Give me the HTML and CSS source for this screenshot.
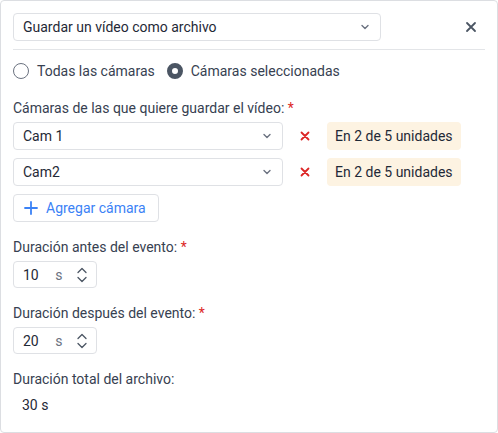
FILE: index.html
```html
<!DOCTYPE html>
<html lang="es">
<head>
<meta charset="utf-8">
<link rel="stylesheet" href="styles.css">
</head>
<body>
<div class="panel">
  <div class="top-row">
    <div class="select select-wide">
      <span>Guardar un vídeo como archivo</span>
      <svg class="chev" width="12" height="12" viewBox="0 0 12 12"><path d="M3 4.5 L6 7.5 L9 4.5" fill="none" stroke="#6b7280" stroke-width="1.4" stroke-linecap="round" stroke-linejoin="round"/></svg>
    </div>
    <button class="close" aria-label="Cerrar">
      <svg width="12" height="12" viewBox="0 0 12 12"><path d="M2 2 L10 10 M10 2 L2 10" stroke="#4b5563" stroke-width="1.8" stroke-linecap="round"/></svg>
    </button>
  </div>
  <div class="divider"></div>
  <div class="radios">
    <label class="radio"><span class="dot"></span>Todas las cámaras</label>
    <label class="radio"><span class="dot on"></span>Cámaras seleccionadas</label>
  </div>

  <div class="label label-first">Cámaras de las que quiere guardar el vídeo: <span class="req">*</span></div>
  <div class="cam-row">
    <div class="select select-cam">
      <span>Cam 1</span>
      <svg class="chev" width="12" height="12" viewBox="0 0 12 12"><path d="M3 4.5 L6 7.5 L9 4.5" fill="none" stroke="#6b7280" stroke-width="1.4" stroke-linecap="round" stroke-linejoin="round"/></svg>
    </div>
    <span class="remove"><svg width="10" height="10" viewBox="0 0 10 10"><path d="M1.5 1.5 L8.5 8.5 M8.5 1.5 L1.5 8.5" stroke="#dc2626" stroke-width="1.8" stroke-linecap="round"/></svg></span>
    <span class="badge">En 2 de 5 unidades</span>
  </div>
  <div class="cam-row">
    <div class="select select-cam">
      <span>Cam2</span>
      <svg class="chev" width="12" height="12" viewBox="0 0 12 12"><path d="M3 4.5 L6 7.5 L9 4.5" fill="none" stroke="#6b7280" stroke-width="1.4" stroke-linecap="round" stroke-linejoin="round"/></svg>
    </div>
    <span class="remove"><svg width="10" height="10" viewBox="0 0 10 10"><path d="M1.5 1.5 L8.5 8.5 M8.5 1.5 L1.5 8.5" stroke="#dc2626" stroke-width="1.8" stroke-linecap="round"/></svg></span>
    <span class="badge">En 2 de 5 unidades</span>
  </div>
  <button class="add-btn">
    <svg width="14" height="14" viewBox="0 0 14 14"><path d="M7 1 V13 M1 7 H13" stroke="#3b82f6" stroke-width="1.8" stroke-linecap="round"/></svg>
    <span>Agregar cámara</span>
  </button>

  <div class="label">Duración antes del evento: <span class="req">*</span></div>
  <div class="num">
    <span class="val">10</span><span class="unit">s</span>
    <svg class="spin" width="12" height="18" viewBox="0 0 12 18"><path d="M2 6.5 L6 2.5 L10 6.5 M2 11.5 L6 15.5 L10 11.5" fill="none" stroke="#4b5563" stroke-width="1.3" stroke-linecap="round" stroke-linejoin="round"/></svg>
  </div>

  <div class="label">Duración después del evento: <span class="req">*</span></div>
  <div class="num">
    <span class="val">20</span><span class="unit">s</span>
    <svg class="spin" width="12" height="18" viewBox="0 0 12 18"><path d="M2 6.5 L6 2.5 L10 6.5 M2 11.5 L6 15.5 L10 11.5" fill="none" stroke="#4b5563" stroke-width="1.3" stroke-linecap="round" stroke-linejoin="round"/></svg>
  </div>

  <div class="label">Duración total del archivo:</div>
  <div class="total">30 s</div>
</div>
</body>
</html>
```
FILE: styles.css
```css
* { box-sizing: border-box; }
html, body { margin: 0; padding: 0; background: #fff; }
body {
  font-family: Roboto, "Liberation Sans", Arial, sans-serif;
  font-size: 14px;
  color: #1f2937;
}
.panel {
  width: 498px;
  height: 433px;
  border: 1px solid #dcdee2;
  border-radius: 4px;
  padding: 12px 12px 0 12px;
}
.top-row {
  display: flex;
  align-items: center;
}
.select {
  display: flex;
  align-items: center;
  justify-content: space-between;
  height: 28px;
  border: 1px solid #dfe1e5;
  border-radius: 4px;
  padding: 0 9px 0 9px;
  color: #1f2937;
  line-height: 1;
}
.select-wide { width: 368px; }
.select-cam { width: 270px; }
.chev { flex: none; }
.close {
  margin-left: auto;
  margin-right: 4px;
  width: 20px;
  height: 20px;
  padding: 0;
  border: 0;
  background: none;
  display: flex;
  align-items: center;
  justify-content: center;
}
.divider {
  height: 1px;
  background: #e3e5e8;
  margin-top: 8px;
}
.radios {
  display: flex;
  align-items: center;
  gap: 12px;
  margin-top: 12px;
  height: 18px;
}
.radio {
  display: flex;
  align-items: center;
  gap: 8px;
  color: #374151;
}
.dot {
  width: 16px;
  height: 16px;
  border-radius: 50%;
  border: 1px solid #6b7280;
  flex: none;
}
.dot.on {
  border: 5px solid #4b5563;
  background: #fff;
}
.label {
  color: #374151;
  margin-top: 17px;
  height: 17px;
  line-height: 17px;
}
.label.label-first { margin-top: 20px; }
.req { color: #dc2626; }
.cam-row {
  display: flex;
  align-items: center;
  margin-top: 5px;
  height: 28px;
}
.cam-row + .cam-row { margin-top: 8px; }
.remove {
  width: 44px;
  display: flex;
  justify-content: center;
}
.badge {
  height: 28px;
  line-height: 28px;
  padding: 0 8px;
  background: #fdf3e2;
  border-radius: 4px;
  color: #1f2937;
}
.add-btn {
  margin-top: 8px;
  height: 28px;
  display: flex;
  align-items: center;
  gap: 8px;
  border: 1px solid #dfe1e5;
  border-radius: 4px;
  background: #fff;
  padding: 0 12px 0 10px;
  font: inherit;
  color: #3b82f6;
}
.num {
  margin-top: 5px;
  width: 84px;
  height: 27px;
  border: 1px solid #dfe1e5;
  border-radius: 4px;
  display: flex;
  align-items: center;
  padding: 0 8px 0 9px;
}
.val { width: 36px; color: #1f2937; }
.unit { color: #6b7280; width: 23px; }
.spin { flex: none; }
.total {
  margin-top: 9px;
  padding-left: 9px;
  height: 17px;
  line-height: 17px;
  color: #1f2937;
}
```
